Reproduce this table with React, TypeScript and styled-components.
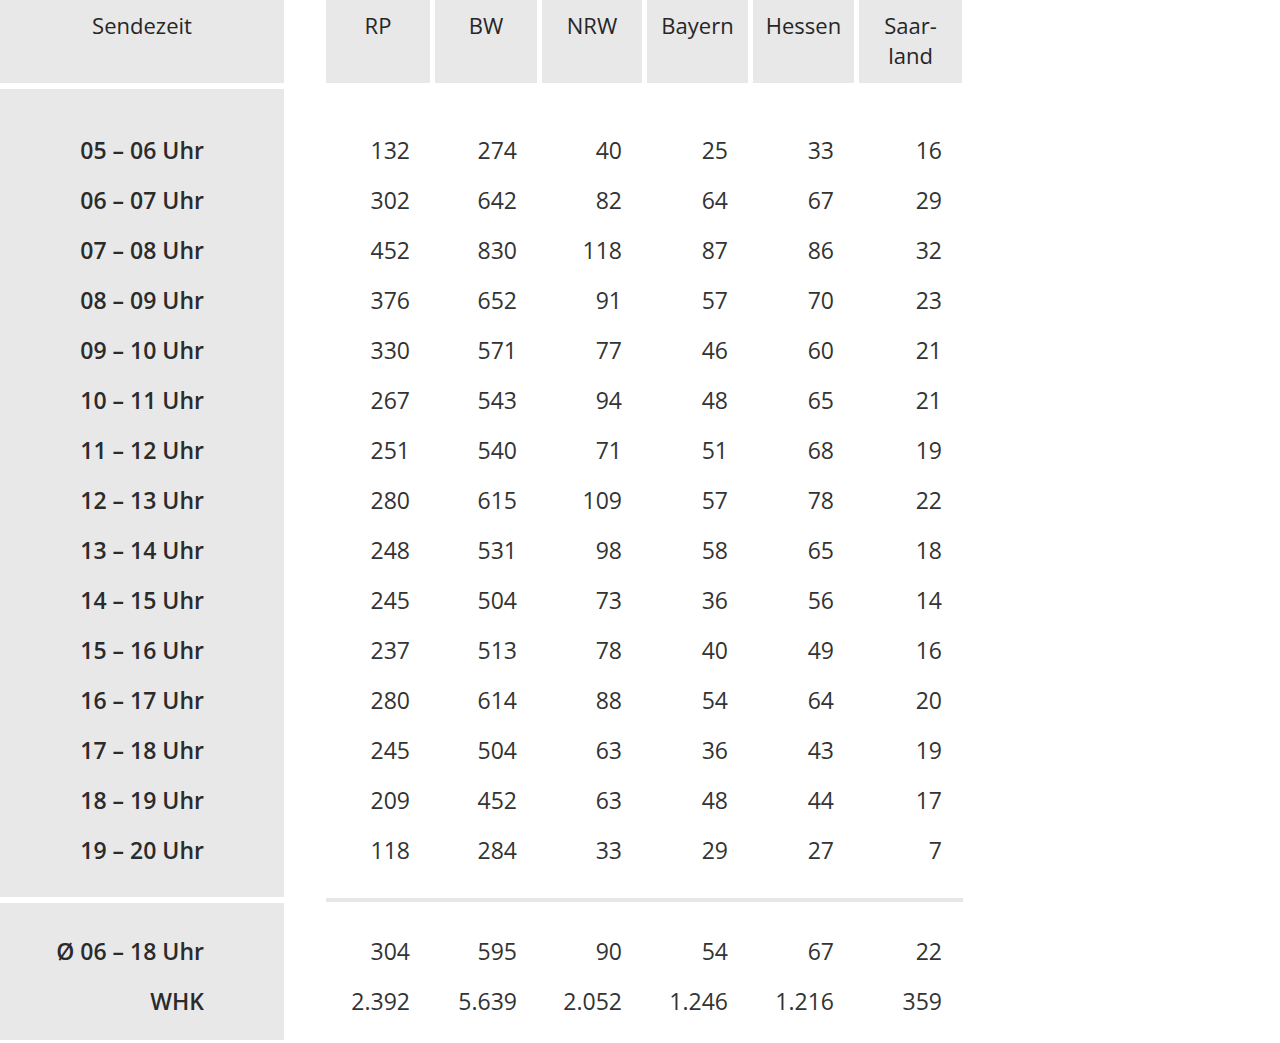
import React from 'react';
import styled, { createGlobalStyle } from 'styled-components';

const GlobalStyle = createGlobalStyle`
    body {
        margin: 0;
        background: #ffffff;
        font-family: "Open Sans", "Noto Sans", sans-serif;
        color: #333333;
    }
`;

const regions = ['RP', 'BW', 'NRW', 'Bayern', 'Hessen', 'Saar-\nland'];

const hourly: [string, number[]][] = [
    ['05 – 06 Uhr', [132, 274, 40, 25, 33, 16]],
    ['06 – 07 Uhr', [302, 642, 82, 64, 67, 29]],
    ['07 – 08 Uhr', [452, 830, 118, 87, 86, 32]],
    ['08 – 09 Uhr', [376, 652, 91, 57, 70, 23]],
    ['09 – 10 Uhr', [330, 571, 77, 46, 60, 21]],
    ['10 – 11 Uhr', [267, 543, 94, 48, 65, 21]],
    ['11 – 12 Uhr', [251, 540, 71, 51, 68, 19]],
    ['12 – 13 Uhr', [280, 615, 109, 57, 78, 22]],
    ['13 – 14 Uhr', [248, 531, 98, 58, 65, 18]],
    ['14 – 15 Uhr', [245, 504, 73, 36, 56, 14]],
    ['15 – 16 Uhr', [237, 513, 78, 40, 49, 16]],
    ['16 – 17 Uhr', [280, 614, 88, 54, 64, 20]],
    ['17 – 18 Uhr', [245, 504, 63, 36, 43, 19]],
    ['18 – 19 Uhr', [209, 452, 63, 48, 44, 17]],
    ['19 – 20 Uhr', [118, 284, 33, 29, 27, 7]],
];

const summary: [string, string[]][] = [
    ['Ø 06 – 18 Uhr', ['304', '595', '90', '54', '67', '22']],
    ['WHK', ['2.392', '5.639', '2.052', '1.246', '1.216', '359']],
];

const App = () => {
    return (
        <>
            <GlobalStyle />
            <Table>
                <HeadRow>
                    <LabelHead>Sendezeit</LabelHead>
                    <Spacer />
                    {regions.map((r) => (
                        <ColHead key={r}>{r}</ColHead>
                    ))}
                </HeadRow>

                <Section $top={36} $bottom={22}>
                    {hourly.map(([label, values]) => (
                        <Row key={label}>
                            <Label>{label}</Label>
                            <Spacer />
                            {values.map((v, i) => (
                                <Value key={i}>{v}</Value>
                            ))}
                        </Row>
                    ))}
                </Section>

                <DividerRow>
                    <Gap />
                    <Rule />
                </DividerRow>

                <Section $top={23} $bottom={14}>
                    {summary.map(([label, values]) => (
                        <Row key={label}>
                            <Label>{label}</Label>
                            <Spacer />
                            {values.map((v, i) => (
                                <Value key={i}>{v}</Value>
                            ))}
                        </Row>
                    ))}
                </Section>
            </Table>
        </>
    );
};

export default App;

// label | spacer | six region columns, 5px gutters
const columns = '284px 32px 104px 102px 100px 101px 101px 103px';

const Table = styled.div`
    width: 1280px;
`;

const HeadRow = styled.div`
    display: grid;
    grid-template-columns: ${columns};
    column-gap: 5px;
    height: 83px;
    margin-bottom: 6px;
`;

const LabelHead = styled.div`
    background: #e8e8e8;
    text-align: center;
    font-size: 22px;
    line-height: 30px;
    padding-top: 10px;
    color: #262626;
`;

const ColHead = styled.div`
    background: #e8e8e8;
    text-align: center;
    font-size: 22px;
    line-height: 30px;
    padding-top: 10px;
    white-space: pre-line;
    color: #262626;
`;

const Spacer = styled.div``;

const Section = styled.div<{ $top: number; $bottom: number }>`
    display: flex;
    flex-direction: column;
    background: linear-gradient(to right, #e8e8e8 0 284px, transparent 284px);
    padding: ${(p) => p.$top}px 0 ${(p) => p.$bottom}px;
`;

const Row = styled.div`
    display: grid;
    grid-template-columns: ${columns};
    column-gap: 5px;
    height: 50px;
    align-items: center;
`;

const Label = styled.div`
    text-align: right;
    padding-right: 80px;
    font-size: 23px;
    font-weight: 600;
    color: #2b2b2b;
`;

const Value = styled.div`
    text-align: right;
    padding-right: 20px;
    font-size: 23px;
    color: #333333;
`;

const DividerRow = styled.div`
    display: flex;
    height: 6px;
    align-items: center;
`;

const Gap = styled.div`
    width: 326px;
`;

const Rule = styled.div`
    width: 637px;
    height: 4px;
    background: #e6e6e6;
`;
